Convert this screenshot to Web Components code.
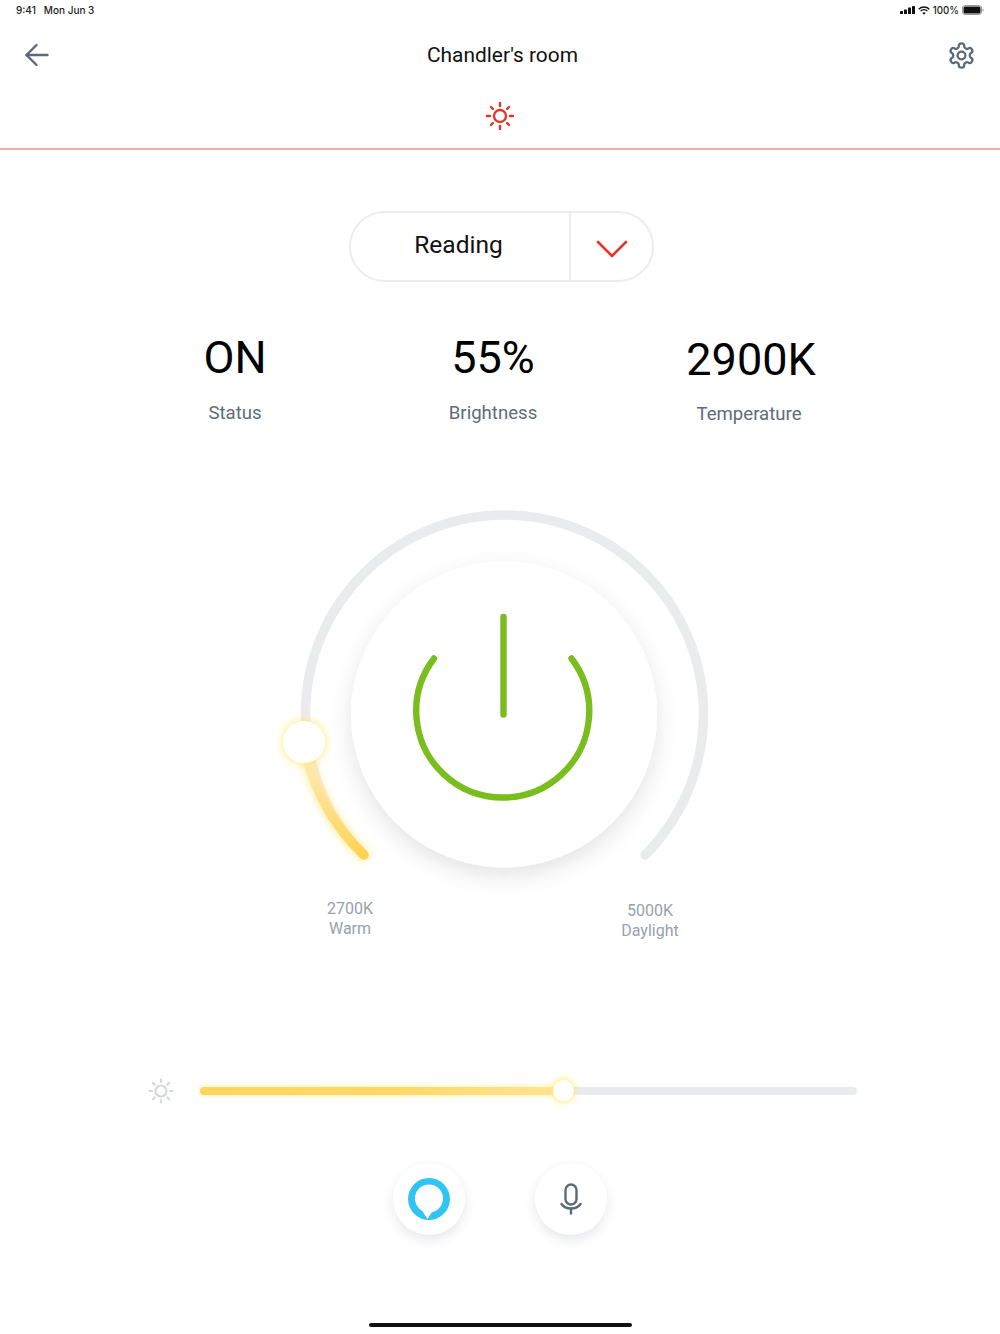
<!DOCTYPE html>
<html>
<head>
<meta charset="utf-8">
<title>Chandler's room</title>
<style>
  html, body { margin: 0; padding: 0; background: #fff; }
  body { font-family: Roboto, "Liberation Sans", sans-serif; }
</style>
</head>
<body>
<app-screen>
  <status-bar></status-bar>
  <room-header>Chandler's room</room-header>
  <mode-select>Reading</mode-select>
  <stat-row>
    <stat-item><span slot="value">ON</span><span slot="label">Status</span></stat-item>
    <stat-item><span slot="value">55%</span><span slot="label">Brightness</span></stat-item>
    <stat-item class="low"><span slot="value">2900K</span><span slot="label">Temperature</span></stat-item>
  </stat-row>
  <temp-dial></temp-dial>
  <dial-labels></dial-labels>
  <brightness-slider></brightness-slider>
  <voice-buttons></voice-buttons>
  <home-bar></home-bar>
</app-screen>

<script>
class AppScreen extends HTMLElement {
    constructor() {
        super();
        this.attachShadow({ mode: "open" }).innerHTML = /* html */ `
            <style>
                :host {
                    display: flex;
                    flex-direction: column;
                    width: 1000px;
                    height: 1334px;
                    overflow: hidden;
                    background: #fff;
                }
            </style>
            <slot></slot>
        `
    }
}

class StatusBar extends HTMLElement {
    constructor() {
        super();
        this.attachShadow({ mode: "open" }).innerHTML = /* html */ `
            <style>
                :host {
                    display: flex;
                    align-items: center;
                    justify-content: space-between;
                    height: 20px;
                    padding: 0 16px;
                    font: 500 10px Inter, "Liberation Sans", sans-serif;
                    color: #1c1c1c;
                }
                .left { display: flex; gap: 8px; }
                .right { display: flex; align-items: center; gap: 3px; font-size: 9.700px; }
            </style>
            <div class="left"><span>9:41</span><span>Mon Jun 3</span></div>
            <div class="right">
                <svg width="15" height="8" viewBox="0 0 15 8" fill="#111">
                    <rect x="0" y="5" width="3" height="3" rx=".5"/>
                    <rect x="4" y="3.5" width="3" height="4.5" rx=".5"/>
                    <rect x="8" y="1.5" width="3" height="6.5" rx=".5"/>
                    <rect x="12" y="0" width="3" height="8" rx=".5"/>
                </svg>
                <svg width="12" height="9" viewBox="0 0 12 9" fill="none" stroke="#111" stroke-width="1.4">
                    <path d="M.7 3.2a7.6 7.6 0 0 1 10.6 0"/>
                    <path d="M2.6 5.1a4.9 4.9 0 0 1 6.8 0"/>
                    <path d="M6 8.8 4.4 7a2.3 2.3 0 0 1 3.2 0z" fill="#111" stroke="none"/>
                </svg>
                <span>100%</span>
                <svg width="22" height="10" viewBox="0 0 22 10">
                    <rect x=".5" y=".5" width="19" height="9" rx="2.5" fill="none" stroke="#999"/>
                    <rect x="1.5" y="1.5" width="17" height="7" rx="1.5" fill="#111"/>
                    <path d="M20.5 3.5c.8.2 1.2.8 1.2 1.5s-.4 1.3-1.2 1.5z" fill="#999"/>
                </svg>
            </div>
        `
    }
}

class RoomHeader extends HTMLElement {
    constructor() {
        super();
        this.attachShadow({ mode: "open" }).innerHTML = /* html */ `
            <style>
                :host {
                    display: flex;
                    flex-direction: column;
                    height: 130px;
                    box-sizing: border-box;
                }
                .top {
                    display: flex;
                    align-items: center;
                    justify-content: space-between;
                    height: 70px;
                    padding: 0 24px;
                }
                .title {
                    font-size: 20.9px;
                    color: #111;
                    margin-left: 8px;
                }
                svg { display: block; }
                .tab {
                    display: flex;
                    justify-content: center;
                    margin-top: 11px;
                }
                .rule {
                    height: 2px;
                    margin-top: auto;
                    background: #f4aaa4;
                }
            </style>
            <div class="top">
                <svg width="26" height="26" viewBox="0 0 26 26" fill="none" stroke="#5c6a76" stroke-width="2.4" stroke-linecap="round" stroke-linejoin="round">
                    <path d="M23.500 13H2.500"/><path d="M12.500 3 2.500 13l10 10"/>
                </svg>
                <span class="title"><slot></slot></span>
                <svg width="29" height="29" viewBox="0 0 24 24" fill="none" stroke="#5c6a76" stroke-width="1.9" stroke-linecap="round" stroke-linejoin="round">
                    <path d="M12.22 2h-.44a2 2 0 0 0-2 2v.18a2 2 0 0 1-1 1.73l-.43.25a2 2 0 0 1-2 0l-.15-.08a2 2 0 0 0-2.73.73l-.22.38a2 2 0 0 0 .73 2.73l.15.1a2 2 0 0 1 1 1.72v.51a2 2 0 0 1-1 1.74l-.15.09a2 2 0 0 0-.73 2.73l.22.38a2 2 0 0 0 2.73.73l.15-.08a2 2 0 0 1 2 0l.43.25a2 2 0 0 1 1 1.73V20a2 2 0 0 0 2 2h.44a2 2 0 0 0 2-2v-.18a2 2 0 0 1 1-1.73l.43-.25a2 2 0 0 1 2 0l.15.08a2 2 0 0 0 2.73-.73l.22-.39a2 2 0 0 0-.73-2.73l-.15-.08a2 2 0 0 1-1-1.74v-.5a2 2 0 0 1 1-1.74l.15-.09a2 2 0 0 0 .73-2.73l-.22-.38a2 2 0 0 0-2.73-.73l-.15.08a2 2 0 0 1-2 0l-.43-.25a2 2 0 0 1-1-1.73V4a2 2 0 0 0-2-2z"/>
                    <circle cx="12" cy="12" r="3.2"/>
                </svg>
            </div>
            <div class="tab">
                <svg width="30" height="30" viewBox="0 0 30 30" fill="none" stroke="#e5352b" stroke-width="2.400" stroke-linecap="round">
                    <circle cx="15" cy="15" r="6"/>
                    <path d="M15 2v3M15 25v3M2 15h3M25 15h3M6 6 7.800 7.800M22.200 22.200 24 24M6 24l1.800-1.800M22.200 7.800 24 6"/>
                </svg>
            </div>
            <div class="rule"></div>
        `
    }
}

class ModeSelect extends HTMLElement {
    constructor() {
        super();
        this.attachShadow({ mode: "open" }).innerHTML = /* html */ `
            <style>
                :host {
                    display: flex;
                    align-self: flex-start;
                    box-sizing: border-box;
                    width: 305px;
                    height: 71px;
                    margin: 61px 0 0 349px;
                    border: 2px solid #ebecee;
                    border-radius: 36px;
                }
                .name {
                    flex: 1;
                    display: flex;
                    align-items: center;
                    justify-content: center;
                    font-size: 24.500px;
                    color: #111;
                    padding: 0 3px 5px 0;
                }
                .arrow {
                    width: 83px;
                    display: flex;
                    align-items: center;
                    justify-content: center;
                    border-left: 2px solid #ebecee;
                    padding: 4px 0 0 0;
                    box-sizing: border-box;
                }
            </style>
            <div class="name"><slot></slot></div>
            <div class="arrow">
                <svg width="32" height="18" viewBox="0 0 32 18" fill="none" stroke="#e5352b" stroke-width="2.600" stroke-linecap="round" stroke-linejoin="round">
                    <path d="M2 2 16 16 30 2"/>
                </svg>
            </div>
        `
    }
}

class StatRow extends HTMLElement {
    constructor() {
        super();
        this.attachShadow({ mode: "open" }).innerHTML = /* html */ `
            <style>
                :host {
                    display: grid;
                    grid-template-columns: repeat(3, 258px);
                    padding-left: 106px;
                    margin-top: 49px;
                }
            </style>
            <slot></slot>
        `
    }
}

class StatItem extends HTMLElement {
    constructor() {
        super();
        this.attachShadow({ mode: "open" }).innerHTML = /* html */ `
            <style>
                :host {
                    display: flex;
                    flex-direction: column;
                    align-items: center;
                }
                :host(.low) { padding-top: 1px; }
                :host(.low) .label { margin-left: -4px; }
                :host(.low) .value { margin-top: 1px; margin-bottom: -1px; }
                .value {
                    font-size: 45px;
                    line-height: 54px;
                    color: #000;
                }
                .label {
                    margin-top: 16px;
                    font-size: 18.600px;
                    line-height: 24px;
                    color: #5f6c78;
                }
            </style>
            <div class="value"><slot name="value"></slot></div>
            <div class="label"><slot name="label"></slot></div>
        `
    }
}

class TempDial extends HTMLElement {
    constructor() {
        super();
        this.attachShadow({ mode: "open" }).innerHTML = /* html */ `
            <style>
                :host {
                    display: block;
                    height: 400px;
                    margin-top: 64px;
                    padding-left: 254px;
                }
                svg { display: block; overflow: visible; }
            </style>
            <svg width="500" height="400" viewBox="254 490 500 400" fill="none">
                <defs>
                    <filter id="disc" x="-30%" y="-30%" width="160%" height="160%">
                        <feDropShadow dx="0" dy="8" stdDeviation="11" flood-color="#000" flood-opacity=".11"/>
                    </filter>
                    <filter id="glow" x="-60%" y="-30%" width="220%" height="160%">
                        <feGaussianBlur stdDeviation="5"/>
                    </filter>
                    <filter id="knob" x="-50%" y="-50%" width="200%" height="200%">
                        <feDropShadow dx="0" dy="0" stdDeviation="5" flood-color="#ffe763" flood-opacity="1"/>
                    </filter>
                    <linearGradient id="warm" gradientUnits="userSpaceOnUse" x1="304" y1="760" x2="362" y2="855">
                        <stop offset="0" stop-color="#ffeab8"/>
                        <stop offset=".6" stop-color="#ffdc78"/>
                        <stop offset="1" stop-color="#ffd350"/>
                    </linearGradient>
                </defs>
                <path d="M364 855A199 199 0 1 1 645 855" stroke="#e9ebed" stroke-width="9.500" stroke-linecap="round"/>
                <path d="M304 742A199 199 0 0 0 364 855" stroke="#ffe98c" stroke-width="10" stroke-linecap="round" filter="url(#glow)"/>
                <path d="M304 742A199 199 0 0 0 364 855" stroke="url(#warm)" stroke-width="9.500" stroke-linecap="round"/>
                <circle cx="504" cy="714.500" r="153" fill="#fff" filter="url(#disc)"/>
                <circle cx="304" cy="742" r="21" fill="#fff" filter="url(#knob)"/>
                <g stroke="#7abd1e" stroke-width="6.400" stroke-linecap="round">
                    <path d="M503.500 617V714.500"/>
                    <path d="M434 658.500A86.500 86.500 0 1 0 571.500 658.500"/>
                </g>
            </svg>
        `
    }
}

class DialLabels extends HTMLElement {
    constructor() {
        super();
        this.attachShadow({ mode: "open" }).innerHTML = /* html */ `
            <style>
                :host {
                    display: flex;
                    justify-content: space-between;
                    width: 400px;
                    margin: 9px 0 0 300px;
                    font-size: 16px;
                    line-height: 20px;
                    color: #99a1a8;
                    text-align: center;
                }
                div { width: 100px; }
                .right { padding-top: 2px; }
            </style>
            <div>2700K<br>Warm</div>
            <div class="right">5000K<br>Daylight</div>
        `
    }
}

class BrightnessSlider extends HTMLElement {
    constructor() {
        super();
        this.attachShadow({ mode: "open" }).innerHTML = /* html */ `
            <style>
                :host {
                    display: flex;
                    align-items: center;
                    gap: 27px;
                    height: 30px;
                    margin-top: 134.500px;
                    padding-left: 147.500px;
                }
                svg { display: block; }
                .track {
                    position: relative;
                    width: 657px;
                    margin-left: -0.500px;
                    height: 8px;
                    border-radius: 4px;
                    background: #e9ebed;
                }
                .fill {
                    width: 363px;
                    height: 8px;
                    border-radius: 4px;
                    background: linear-gradient(90deg, #ffd65c 0%, #ffd866 55%, #ffe496 100%);
                    box-shadow: 0 0 6px #fff0a0;
                }
                .thumb {
                    position: absolute;
                    left: 353px;
                    top: -6.500px;
                    width: 21px;
                    height: 21px;
                    border-radius: 50%;
                    background: #fff;
                    box-shadow: 0 0 6px 1px #ffe97a;
                }
            </style>
            <svg width="26" height="26" viewBox="0 0 26 26" fill="none" stroke="#d6d9dc" stroke-width="2.200" stroke-linecap="round">
                <circle cx="13" cy="13" r="5.500"/>
                <path d="M13 1.500v2.500M13 22v2.500M1.500 13H4M22 13h2.500M4.900 4.900 6.600 6.600M19.400 19.400l1.700 1.700M4.900 21.100l1.700-1.700M19.400 6.600l1.700-1.700"/>
            </svg>
            <div class="track">
                <div class="fill"></div>
                <div class="thumb"></div>
            </div>
        `
    }
}

class VoiceButtons extends HTMLElement {
    constructor() {
        super();
        this.attachShadow({ mode: "open" }).innerHTML = /* html */ `
            <style>
                :host {
                    display: flex;
                    gap: 70px;
                    margin: 57.500px 0 0 393px;
                }
                .btn {
                    width: 72px;
                    height: 72px;
                    border-radius: 50%;
                    background: #fff;
                    box-shadow: 0 5px 12px rgba(40, 50, 60, .11);
                    display: flex;
                    align-items: center;
                    justify-content: center;
                }
                svg { display: block; }
            </style>
            <div class="btn">
                <svg width="44" height="44" viewBox="0 0 44 44">
                    <circle cx="22" cy="22" r="21" fill="#31c4f3"/>
                    <circle cx="22" cy="21.500" r="14" fill="#fff"/>
                    <path d="M14 32 20.500 42 25 35z" fill="#fff"/>
                </svg>
            </div>
            <div class="btn">
                <svg width="24" height="32" viewBox="0 0 24 32" fill="none" stroke="#5c6a76" stroke-width="2.400" stroke-linecap="round">
                    <rect x="6.500" y="1.500" width="11" height="20" rx="5.500"/>
                    <path d="M2.500 21c2 3 5.500 4.500 9.500 4.500s7.500-1.500 9.500-4.500"/>
                    <path d="M12 25.500v5"/>
                </svg>
            </div>
        `
    }
}

class HomeBar extends HTMLElement {
    constructor() {
        super();
        this.attachShadow({ mode: "open" }).innerHTML = /* html */ `
            <style>
                :host {
                    display: block;
                    align-self: center;
                    width: 263px;
                    height: 4px;
                    margin-top: auto;
                    margin-bottom: 7px;
                    border-radius: 2px;
                    background: #111;
                }
            </style>
        `
    }
}

customElements.define('app-screen', AppScreen)
customElements.define('status-bar', StatusBar)
customElements.define('room-header', RoomHeader)
customElements.define('mode-select', ModeSelect)
customElements.define('stat-row', StatRow)
customElements.define('stat-item', StatItem)
customElements.define('temp-dial', TempDial)
customElements.define('dial-labels', DialLabels)
customElements.define('brightness-slider', BrightnessSlider)
customElements.define('voice-buttons', VoiceButtons)
customElements.define('home-bar', HomeBar)
</script>
</body>
</html>
